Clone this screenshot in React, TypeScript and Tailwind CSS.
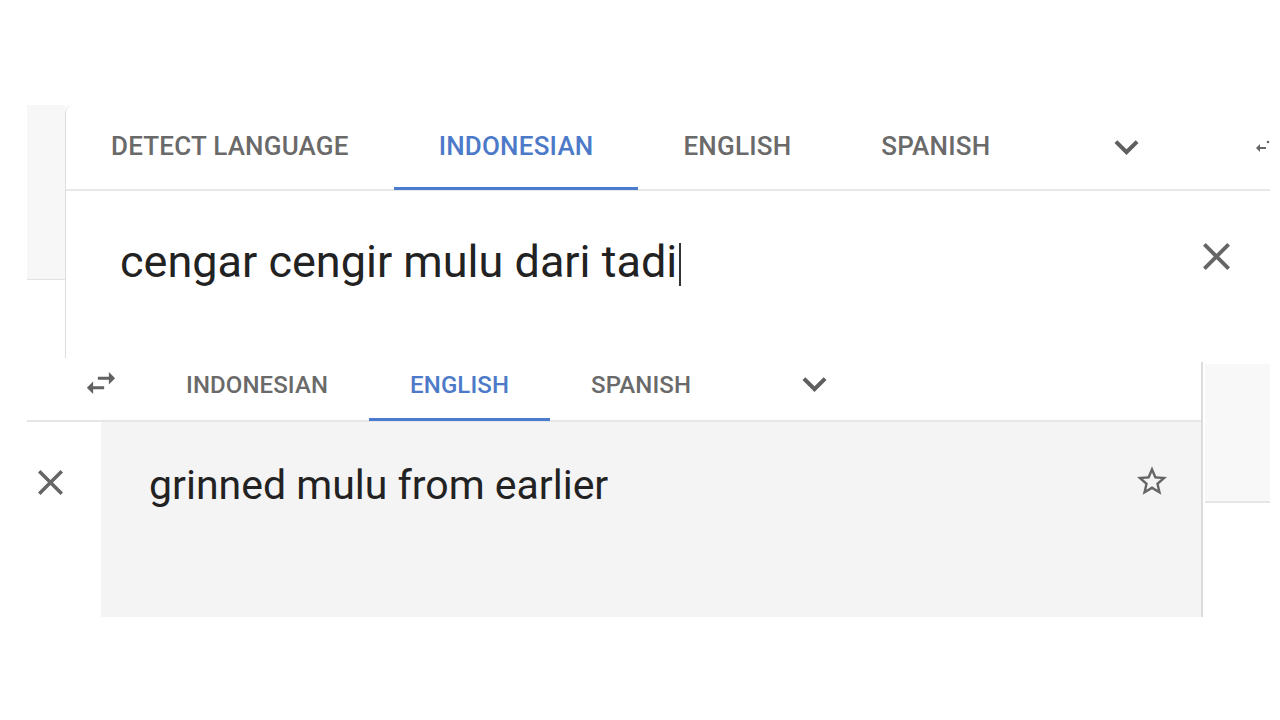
import React from 'react';

const CloseIcon: React.FC<{ className?: string }> = ({ className }) => (
  <svg viewBox="5 5 14 14" className={className} fill="currentColor">
    <path d="M19 6.41L17.59 5 12 10.59 6.41 5 5 6.41 10.59 12 5 17.59 6.41 19 12 13.41 17.59 19 19 17.59 13.41 12z" />
  </svg>
);

const ChevronIcon: React.FC<{ className?: string }> = ({ className }) => (
  <svg viewBox="6 8 12 8" className={className} fill="currentColor">
    <path d="M16.59 8.59L12 13.17 7.41 8.59 6 10l6 6 6-6z" />
  </svg>
);

const StarIcon: React.FC<{ className?: string }> = ({ className }) => (
  <svg viewBox="2 2 20 19" className={className} fill="currentColor">
    <path d="M22 9.24l-7.19-.62L12 2 9.19 8.63 2 9.24l5.46 4.73L5.820 21 12 17.27 18.18 21l-1.63-7.03L22 9.24zM12 15.4l-3.76 2.27 1-4.28-3.32-2.88 4.38-.38L12 6.1l1.71 4.04 4.38.38-3.320 2.88 1 4.28L12 15.4z" />
  </svg>
);

const SwapIcon: React.FC<{ className?: string }> = ({ className }) => (
  <svg viewBox="3 5 18 14" className={className} fill="currentColor">
    <path d="M6.99 11L3 15l3.99 4v-3H14v-2H6.99v-3zM21 9l-3.99-4v3H10v2h7.01v3L21 9z" />
  </svg>
);

const Tab: React.FC<{ label: string; active?: boolean; size: 'lg' | 'sm' }> = ({ label, active, size }) => (
  <div
    className={
      'flex -mb-px border-b-[3px] ' +
      (size === 'lg'
        ? 'items-center px-[45px] text-[26px] tracking-[0.2px] '
        : 'items-start pt-[5px] px-[41px] text-[24px] tracking-[0.1px] ') +
      (active ? 'border-[#4a7bd0] text-[#4d7ac8]' : 'border-transparent text-[#6a6a6a]')
    }
  >
    <span className="font-medium">{label}</span>
  </div>
);

export default function App() {
  return (
    <div className="w-[1280px] h-[720px] bg-white overflow-hidden pt-[105px] font-['Roboto',sans-serif]">
      {/* upper fragment */}
      <div className="flex h-[257px]">
        <div className="ml-[27px] w-[38px] h-[175px] bg-[#f7f7f7] border-b border-[#e2e2e2]" />
        <div className="w-[1205px] h-[253px] border-l border-[#dedede] rounded-tl-[8px] flex flex-col">
          <div className="h-[86px] flex border-b-2 border-[#e8e8e8]">
            <Tab label="DETECT LANGUAGE" size="lg" />
            <Tab label="INDONESIAN" size="lg" active />
            <Tab label="ENGLISH" size="lg" />
            <Tab label="SPANISH" size="lg" />
            <div className="flex items-center ml-[79px]">
              <ChevronIcon className="w-[25px] h-[16px] text-[#5f5f5f]" />
            </div>
            <div className="flex items-center ml-auto">
              <svg viewBox="0 0 16 16" className="w-[16px] h-[16px] text-[#666]" fill="currentColor">
                <path d="M6 5L2 9l4 4v-3h6V8H6z" />
                <circle cx="14" cy="3" r="1.3" />
              </svg>
            </div>
          </div>
          <div className="flex items-start mt-[48px] pl-[54px] pr-[40px]">
            <div className="flex-1 flex items-start text-[45px] text-[#222] leading-none">
              <span>cengar cengir mulu dari tadi</span>
              <span className="inline-block w-[2px] h-[43px] bg-[#333] ml-[2px] mt-[4px]" />
            </div>
            <CloseIcon className="w-[27px] h-[27px] mt-[4px] text-[#666]" />
          </div>
        </div>
      </div>

      {/* lower fragment */}
      <div className="flex">
        <div className="ml-[27px] w-[1176px] flex flex-col border-r-2 border-[#dcdcdc]">
          <div className="h-[60px] flex border-b-2 border-[#e6e6e6]">
            <div className="w-[118px] pl-[58px] pt-[10px]">
              <SwapIcon className="w-[32px] h-[22px] text-[#626262]" />
            </div>
            <Tab label="INDONESIAN" size="sm" />
            <Tab label="ENGLISH" size="sm" active />
            <Tab label="SPANISH" size="sm" />
            <div className="ml-[70px] pt-[14px]">
              <ChevronIcon className="w-[25px] h-[16px] text-[#5f5f5f]" />
            </div>
          </div>
          <div className="flex h-[195px]">
            <div className="w-[74px] pl-[11px] pt-[48px]">
              <CloseIcon className="w-[25px] h-[25px] text-[#666]" />
            </div>
            <div className="flex-1 bg-[#f4f4f4] flex items-start pl-[48px] pr-[34px] pt-[43px]">
              <div className="flex-1 text-[41px] leading-none text-[#222]">grinned mulu from earlier</div>
              <StarIcon className="w-[30px] h-[29px] mt-[1px] text-[#666]" />
            </div>
          </div>
        </div>
        <div className="ml-[2px] mt-[2px] w-[65px] h-[139px] bg-[#f8f8f8] border-b-2 border-[#e6e6e6]" />
      </div>
    </div>
  );
}
